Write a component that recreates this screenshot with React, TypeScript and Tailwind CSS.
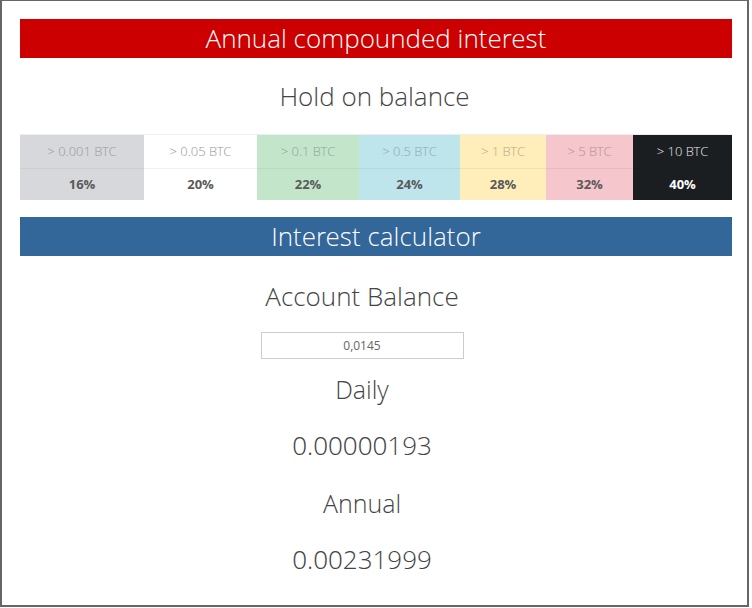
const tiers = [
  { min: "> 0.001 BTC", rate: "16%", cell: "bg-[#d6d8db]", top: "text-[#999b9e]", bottom: "text-[#5a5a5a]" },
  { min: "> 0.05 BTC", rate: "20%", cell: "bg-white", top: "text-[#999]", bottom: "text-[#5a5a5a]" },
  { min: "> 0.1 BTC", rate: "22%", cell: "bg-[#c3e6cb]", top: "text-[#8fa596]", bottom: "text-[#5a5a5a]" },
  { min: "> 0.5 BTC", rate: "24%", cell: "bg-[#bee5eb]", top: "text-[#8ea9ae]", bottom: "text-[#5a5a5a]" },
  { min: "> 1 BTC", rate: "28%", cell: "bg-[#ffeeba]", top: "text-[#b5a98a]", bottom: "text-[#5a5a5a]" },
  { min: "> 5 BTC", rate: "32%", cell: "bg-[#f5c6cb]", top: "text-[#b09296]", bottom: "text-[#5a5a5a]" },
  { min: "> 10 BTC", rate: "40%", cell: "bg-[#1b1e21]", top: "text-[#e8e8e8]", bottom: "text-white" },
];

const widths = ["w-[124px]", "w-[113px]", "w-[102px]", "w-[101px]", "w-[86px]", "w-[87px]", "w-[99px]"];

const regular = { fontFamily: '"Open Sans", "Liberation Sans", sans-serif' };

function Banner({ title, color }: { title: string; color: string }) {
  return (
    <div className={`ml-[18px] mr-[15px] flex h-[39px] items-center justify-center text-[26px] font-light text-white ${color}`}>
      {title}
    </div>
  );
}

export default function App() {
  return (
    <div
      className="h-[607px] w-[749px] border-b-2 border-l-2 border-r-2 border-t border-[#666] bg-white text-[#444]"
      style={{ fontFamily: '"Open Sans Light", "Open Sans", "Liberation Sans", sans-serif' }}
    >
      <div className="pt-[18px]">
        <Banner title="Annual compounded interest" color="bg-[#cc0000]" />
      </div>
      <div className="flex h-[76px] items-center justify-center text-[26px] font-light">Hold on balance</div>

      <div className="ml-[18px] mr-[15px] flex border-t border-[#eee]">
        {tiers.map((t, i) => (
          <div key={t.min} className={`flex flex-col ${widths[i]} ${t.cell}`}>
            <div className={`flex h-[33px] items-center justify-center text-[13px] font-light ${t.top}`}>{t.min}</div>
            <div
              className={`flex h-[32px] items-center justify-center border-t border-black/5 text-[13px] font-bold ${t.bottom}`}
              style={regular}
            >
              {t.rate}
            </div>
          </div>
        ))}
      </div>

      <div className="pt-[17px]">
        <Banner title="Interest calculator" color="bg-[#336699]" />
      </div>

      <div className="flex flex-col items-center pr-[25px] font-light">
        <div className="mt-[23px] text-[26px] leading-[34px]">Account Balance</div>
        <div
          className="mt-[19px] flex h-[27px] w-[203px] items-center justify-center border border-[#ccc] text-[12px] font-normal text-[#666]"
          style={regular}
        >
          0,0145
        </div>
        <div className="mt-[13px] text-[25px] leading-[34px]">Daily</div>
        <div className="mt-[22px] text-[26px] leading-[34px]">0.00000193</div>
        <div className="mt-[24px] text-[25px] leading-[34px]">Annual</div>
        <div className="mt-[22px] text-[26px] leading-[34px]">0.00231999</div>
      </div>
    </div>
  );
}
